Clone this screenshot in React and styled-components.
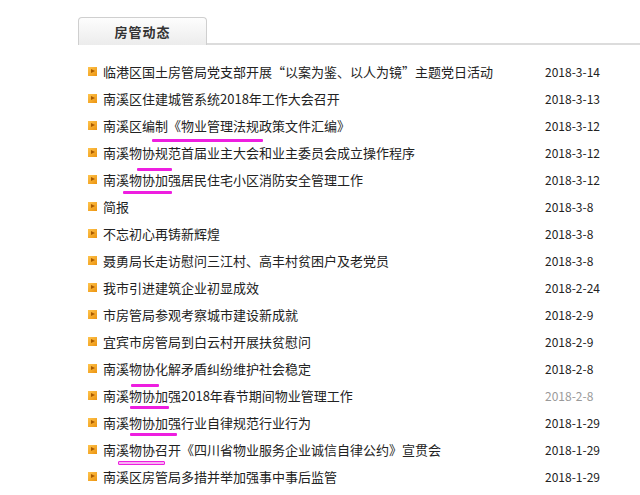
import React from 'react'
import styled, { createGlobalStyle } from 'styled-components'

const GlobalStyle = createGlobalStyle`
  body {
    margin: 0;
    background: #fff;
    font-family: "Noto Sans CJK SC", "Liberation Sans", sans-serif;
  }
`

const Panel = styled.div`
  position: relative;
  width: 640px;
  height: 495px;
  padding-top: 16px;
  box-sizing: border-box;
`

const TabBar = styled.div`
  margin-left: 78px;
  height: 27px;
  border-bottom: 2px solid #dcdcdc;
  display: flex;
  align-items: flex-end;
`

const Tab = styled.div`
  width: 127px;
  height: 27px;
  margin-bottom: -2px;
  border: 1px solid #cfcfcf;
  border-bottom: none;
  border-radius: 4px 4px 0 0;
  background: linear-gradient(#fdfdfd, #ececec);
  display: flex;
  align-items: center;
  justify-content: center;
  font-size: 13px;
  font-weight: bold;
  color: #333;
  letter-spacing: 1px;
`

const List = styled.ul`
  list-style: none;
  margin: 13px 0 0;
  padding: 0 0 0 88px;
`

const Row = styled.li`
  height: 27px;
  display: flex;
  align-items: center;
  font-size: 13px;
  color: #222;
`

const Bullet = styled.span`
  width: 9px;
  height: 9px;
  margin-right: 6px;
  flex: none;
  background: linear-gradient(135deg, #ffc44d, #ec9410);
  position: relative;

  &::after {
    content: '';
    position: absolute;
    left: 3px;
    top: 2px;
    border-left: 4px solid #a85a00;
    border-top: 2.5px solid transparent;
    border-bottom: 2.5px solid transparent;
  }
`

const Title = styled.span`
  flex: 1;
  white-space: nowrap;
  overflow: hidden;
`

const Date = styled.span`
  width: 95px;
  flex: none;
  font-size: 12px;
  color: ${p => (p.$faded ? '#9a9a9a' : '#222')};
`

const Mark = styled.div`
  position: absolute;
  height: 3px;
  background: #ee1ee0;
  border-radius: 1px;
`

const HollowMark = styled(Mark)`
  height: 2px;
  background: #f7b4f2;
  border: 1px solid #ee1ee0;
`

const news = [
  ['临港区国土房管局党支部开展“以案为鉴、以人为镜”主题党日活动', '2018-3-14'],
  ['南溪区住建城管系统2018年工作大会召开', '2018-3-13'],
  ['南溪区编制《物业管理法规政策文件汇编》', '2018-3-12'],
  ['南溪物协规范首届业主大会和业主委员会成立操作程序', '2018-3-12'],
  ['南溪物协加强居民住宅小区消防安全管理工作', '2018-3-12'],
  ['简报', '2018-3-8'],
  ['不忘初心再铸新辉煌', '2018-3-8'],
  ['聂勇局长走访慰问三江村、高丰村贫困户及老党员', '2018-3-8'],
  ['我市引进建筑企业初显成效', '2018-2-24'],
  ['市房管局参观考察城市建设新成就', '2018-2-9'],
  ['宜宾市房管局到白云村开展扶贫慰问', '2018-2-9'],
  ['南溪物协化解矛盾纠纷维护社会稳定', '2018-2-8'],
  ['南溪物协加强2018年春节期间物业管理工作', '2018-2-8', true],
  ['南溪物协加强行业自律规范行业行为', '2018-1-29'],
  ['南溪物协召开《四川省物业服务企业诚信自律公约》宣贯会', '2018-1-29'],
  ['南溪区房管局多措并举加强事中事后监管', '2018-1-29'],
]

const marks = [
  { x: 152, y: 139, w: 111 },
  { x: 137, y: 168, w: 35 },
  { x: 123, y: 191, w: 49 },
  { x: 131, y: 384, w: 28 },
  { x: 130, y: 406, w: 39 },
  { x: 130, y: 433, w: 47 },
  { x: 118, y: 461, w: 45, hollow: true },
]

export default function App() {
  return (
    <>
      <GlobalStyle />
      <Panel>
        <TabBar>
          <Tab>房管动态</Tab>
        </TabBar>
        <List>
          {news.map(([title, date, faded], i) => (
            <Row key={i}>
              <Bullet />
              <Title>{title}</Title>
              <Date $faded={faded}>{date}</Date>
            </Row>
          ))}
        </List>
        {marks.map((m, i) => {
          const M = m.hollow ? HollowMark : Mark
          return <M key={i} style={{ left: m.x, top: m.y, width: m.w }} />
        })}
      </Panel>
    </>
  )
}
